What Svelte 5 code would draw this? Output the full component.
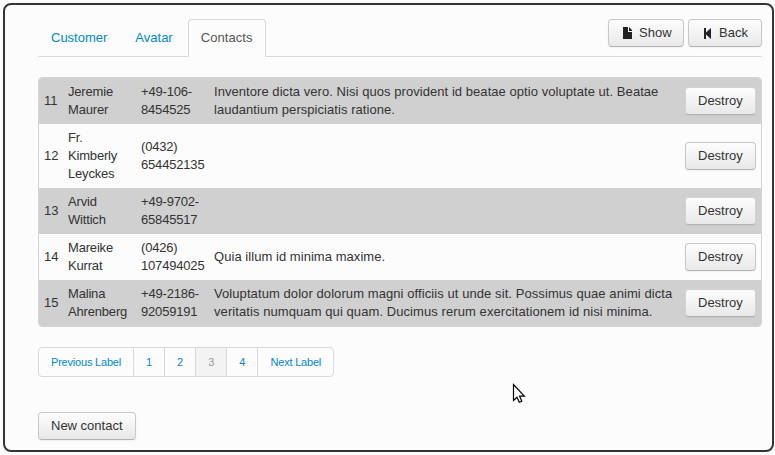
<script>
  const tabs = ['Customer', 'Avatar', 'Contacts'];
  const activeTab = 'Contacts';
  const contacts = [
    { id: 11, name: ['Jeremie', 'Maurer'], phone: ['+49-106-', '8454525'], note: ['Inventore dicta vero. Nisi quos provident id beatae optio voluptate ut. Beatae', 'laudantium perspiciatis ratione.'], tracking: 0.055 },
    { id: 12, name: ['Fr.', 'Kimberly', 'Leyckes'], phone: ['(0432)', '654452135'], note: [], tracking: 0 },
    { id: 13, name: ['Arvid', 'Wittich'], phone: ['+49-9702-', '65845517'], note: [], tracking: 0 },
    { id: 14, name: ['Mareike', 'Kurrat'], phone: ['(0426)', '107494025'], note: ['Quia illum id minima maxime.'], tracking: 0.05 },
    { id: 15, name: ['Malina', 'Ahrenberg'], phone: ['+49-2186-', '92059191'], note: ['Voluptatum dolor dolorum magni officiis ut unde sit. Possimus quae animi dicta', 'veritatis numquam qui quam. Ducimus rerum exercitationem id nisi minima.'], tracking: 0.08 }
  ];
  const pages = ['Previous Label', '1', '2', '3', '4', 'Next Label'];
  const currentPage = '3';
</script>

{#snippet lines(parts)}
  {#each parts as part}<div>{part}</div>{/each}
{/snippet}

<main class="frame">
  <header>
    <nav class="tabs">
      {#each tabs as tab}
        <a class="tab" class:active={tab === activeTab} href="#{tab}">{tab}</a>
      {/each}
    </nav>
    <div class="actions">
      <button class="btn show">
        <svg width="14" height="14" viewBox="0 0 14 14"><path fill="#222" d="M2 1h5v5h4v7H2z M8 1l3 3v1H8z" /></svg>Show
      </button>
      <button class="btn back">
        <svg width="14" height="14" viewBox="0 0 14 14"><path fill="#222" d="M3 2h2v4.500l5-4.500v11L5 8.500V13H3z" /></svg>Back
      </button>
    </div>
  </header>

  <table>
    <tbody>
      {#each contacts as c}
        <tr>
          <td class="id">{c.id}</td>
          <td class="name">{@render lines(c.name)}</td>
          <td class="phone">{@render lines(c.phone)}</td>
          <td class="note" style:letter-spacing="{c.tracking}px">{@render lines(c.note)}</td>
          <td class="act"><button class="btn">Destroy</button></td>
        </tr>
      {/each}
    </tbody>
  </table>

  <nav class="pages">
    {#each pages as page}
      <a class:label={page.length > 1} class:current={page === currentPage} href="#{page}">{page}</a>
    {/each}
  </nav>

  <button class="btn">New contact</button>

  <svg class="cursor" width="14" height="22" viewBox="0 0 14 22">
    <path d="M1.500 1.500v16l3.500-3.200 2.300 5 2.500-1.100-2.200-5h4.700z" fill="#fff" stroke="#000" stroke-width="1.200" />
  </svg>
</main>

<style>
  :global(body) {
    background: #fcfcfc;
    overflow: hidden;
  }
  .frame {
    position: relative;
    box-sizing: border-box;
    width: 771px;
    height: 449px;
    margin: 3px 0 0 3px;
    padding: 14px 10px 0 33px;
    border: 2px solid #353538;
    border-radius: 8px;
    background: #fcfcfc;
    color: #333;
    font: 13px/18px "Liberation Sans", Arial, sans-serif;
  }
  header {
    display: flex;
    justify-content: space-between;
    box-sizing: border-box;
    width: 724px;
    height: 38px;
    border-bottom: 1px solid #d9d9d9;
  }
  a {
    color: #0088cc;
    text-decoration: none;
  }
  .tabs {
    display: flex;
    gap: 2px;
    height: 38px;
  }
  .tab {
    box-sizing: border-box;
    height: 38px;
    padding: 9px 12px;
    border: 1px solid transparent;
    border-radius: 4px 4px 0 0;
  }
  .tab.active {
    width: 78px;
    border-color: #d9d9d9;
    border-bottom-color: #fcfcfc;
    background: #fcfcfc;
    color: #555;
    letter-spacing: 0.08px;
  }
  .actions {
    display: flex;
    gap: 4px;
  }
  .btn {
    display: inline-flex;
    align-items: center;
    box-sizing: border-box;
    height: 28px;
    margin: 0;
    padding: 0 12px;
    border: 1px solid #c8c8c8;
    border-bottom-color: #b3b3b3;
    border-radius: 4px;
    background: linear-gradient(#fdfdfd, #e8e8e8);
    box-shadow: inset 0 1px 0 rgba(255, 255, 255, 0.2), 0 1px 2px rgba(0, 0, 0, 0.05);
    color: #333;
    font: inherit;
    white-space: nowrap;
  }
  .btn svg {
    flex: none;
    margin-right: 4px;
  }
  .show {
    width: 76px;
  }
  .back {
    width: 74px;
  }
  table {
    box-sizing: border-box;
    width: 724px;
    margin: 20px 0;
    border: 1px solid #d4d4d4;
    border-radius: 4px;
    border-spacing: 0;
    table-layout: fixed;
    overflow: hidden;
  }
  td {
    padding: 5px;
    vertical-align: middle;
    white-space: nowrap;
  }
  tr:nth-child(odd) {
    background: #d0d0d0;
  }
  .id {
    width: 14px;
  }
  .name,
  .phone {
    width: 63px;
    letter-spacing: -0.18px;
  }
  .act {
    width: 71px;
  }
  .act .btn {
    display: flex;
  }
  tr:nth-child(odd) .btn {
    border-color: #d4d4d4;
    border-bottom-color: #b3b3b3;
  }
  .pages {
    display: flex;
    box-sizing: border-box;
    width: max-content;
    height: 30px;
    margin-bottom: 35px;
    border: 1px solid #d9d9d9;
    border-radius: 4px;
    overflow: hidden;
    font-size: 11px;
    line-height: 28px;
  }
  .pages a {
    padding: 0 12px;
    border-right: 1px solid #d9d9d9;
  }
  .pages .label {
    letter-spacing: -0.2px;
  }
  .pages a:last-child {
    border-right: 0;
  }
  .pages .current {
    background: #f3f3f3;
    color: #999;
  }
  .cursor {
    position: absolute;
    left: 507px;
    top: 378px;
  }
</style>
